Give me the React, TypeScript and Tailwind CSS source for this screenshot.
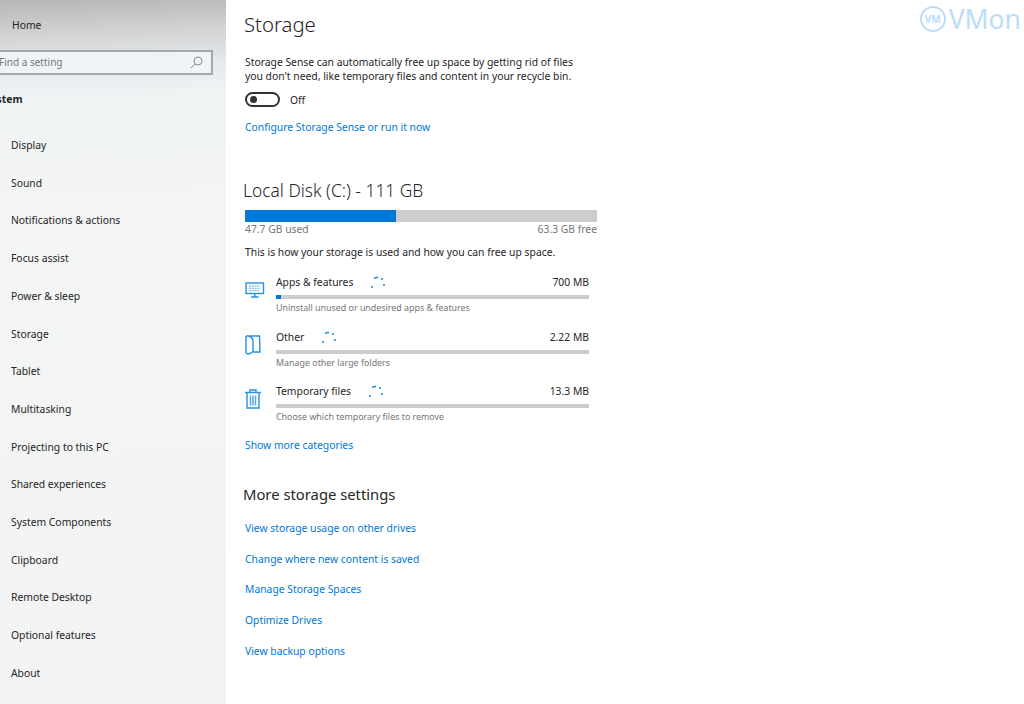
const sideItems = [
  'Display',
  'Sound',
  'Notifications & actions',
  'Focus assist',
  'Power & sleep',
  'Storage',
  'Tablet',
  'Multitasking',
  'Projecting to this PC',
  'Shared experiences',
  'System Components',
  'Clipboard',
  'Remote Desktop',
  'Optional features',
  'About',
]

const moreLinks = [
  'View storage usage on other drives',
  'Change where new content is saved',
  'Manage Storage Spaces',
  'Optimize Drives',
  'View backup options',
]

function Spinner() {
  return (
    <svg width="16" height="14" viewBox="0 0 16 14" className="shrink-0" fill="#0078d7">
      <circle cx="4" cy="2" r="0.9" />
      <circle cx="6" cy="1.5" r="0.9" />
      <circle cx="11" cy="3" r="0.9" />
      <circle cx="13" cy="9" r="0.9" />
      <circle cx="1" cy="11" r="0.9" />
    </svg>
  )
}

function AppsIcon() {
  return (
    <svg width="20" height="16" viewBox="0 0 20 16" fill="none" stroke="#2b8fe0" strokeWidth="1.4">
      <rect x="1" y="1" width="17.500" height="10.500" />
      <path d="M9.750 11.500v3M6 15h7.500" />
      <path d="M4 4h11.500M4 6.300h11.500M4 8.600h11.500" stroke="#8cc2ee" strokeWidth="1.300" strokeDasharray="2 0.800" />
    </svg>
  )
}

function OtherIcon() {
  return (
    <svg width="16" height="20" viewBox="0 0 16 20" fill="none" stroke="#2b8fe0" strokeWidth="1.4">
      <path d="M1 1h13.500l.5 16H8" />
      <path d="M3.500 1c3 1 4.500 3 4.500 5v10c0 1-2 2-4.500 3C2 19 1 18 1 17V1" />
    </svg>
  )
}

function TrashIcon() {
  return (
    <svg width="16" height="20" viewBox="0 0 16 20" fill="none" stroke="#2b8fe0" strokeWidth="1.4">
      <path d="M0 3.500h16M5 3.500V1h6v2.500" />
      <path d="M2 3.500v15.500h12V3.500" />
      <path d="M5.500 6.500v10M8 6.500v10M10.500 6.500v10" stroke="#5aa8e8" strokeWidth="1.500" />
    </svg>
  )
}

function StorageRow({
  icon,
  title,
  size,
  desc,
  used,
}: {
  icon: React.ReactNode
  title: string
  size: string
  desc: string
  used?: boolean
}) {
  return (
    <div className="flex h-[54.5px] items-start">
      <div className="flex h-[32px] w-[31px] shrink-0 items-center">{icon}</div>
      <div className="w-[313px]">
        <div className="flex h-[18px] items-center text-[#262626]">
          <span>{title}</span>
          <span className="ml-[18px]">
            <Spinner />
          </span>
          <span className="ml-auto">{size}</span>
        </div>
        <div className="mt-[3px] h-[4px] bg-[#cccccc]">
          {used && <div className="h-full w-[5px] bg-[#0078d7]" />}
        </div>
        <div className="mt-[2px] text-[8.900px] leading-[14px] text-[#767676]">{desc}</div>
      </div>
    </div>
  )
}

export default function App() {
  return (
    <div className="relative flex h-[704px] w-[1024px] overflow-hidden bg-white font-['Noto_Sans',sans-serif] text-[10.350px] text-[#262626]">
      <aside className="w-[226px] shrink-0 bg-[linear-gradient(178deg,#b6b6b6_0%,#d2d3d4_5%,#e6eaed_10%,#f0f3f4_14%,#f4f5f5_35%,#f1f3f4_100%)]">
        <div className="flex h-[50px] items-center pl-3 pt-px">Home</div>
        <div className="-ml-2 flex h-[25px] w-[221px] items-center justify-between border-2 border-[#a5a7a9] bg-[#f1f4f6] pl-[5px] pr-2 text-[10px] text-[#767676]">
          <span>Find a setting</span>
          <svg width="13" height="13" viewBox="0 0 13 13" fill="none" stroke="#8a8a8a" strokeWidth="1">
            <circle cx="8" cy="5" r="4" />
            <path d="M5 8l-4 4" />
          </svg>
        </div>
        <div className="-ml-[15px] mt-[17px] h-[27px] font-bold">System</div>
        <nav className="mt-[8px]">
          {sideItems.map((item) => (
            <div key={item} className="flex h-[37.700px] items-center pl-[11px]">
              {item}
            </div>
          ))}
        </nav>
      </aside>

      <main className="pl-[19px]">
        <h1 className="-ml-px mt-[9px] h-[30px] text-[20.300px] font-light leading-[30px] text-[#1f1f1f]">Storage</h1>
        <p className="mt-[16px] w-[340px] leading-[14px]">
          Storage Sense can automatically free up space by getting rid of files you don't need, like
          temporary files and content in your recycle bin.
        </p>
        <div className="mt-[8px] flex items-center gap-[10px]">
          <div className="flex h-[15px] w-[35px] items-center rounded-full border-2 border-[#333333] pl-[3px]">
            <div className="h-[7px] w-[7px] rounded-full bg-[#333333]" />
          </div>
          <span className="pt-[2px]">Off</span>
        </div>
        <a className="mt-[11px] block text-[#0078d7]">Configure Storage Sense or run it now</a>

        <h2 className="-ml-[2px] mt-[42px] h-[26px] text-[17.400px] font-light leading-[26px]">Local Disk (C:) - 111 GB</h2>
        <div className="mt-[7px] h-[12px] w-[352px] bg-[#cccccc]">
          <div className="h-full w-[151px] bg-[#0078d7]" />
        </div>
        <div className="flex w-[352px] justify-between text-[#767676]">
          <span>47.7 GB used</span>
          <span>63.3 GB free</span>
        </div>
        <p className="mt-[7px]">This is how your storage is used and how you can free up space.</p>

        <div className="mt-[14px]">
          <StorageRow
            icon={<AppsIcon />}
            title="Apps & features"
            size="700 MB"
            desc="Uninstall unused or undesired apps & features"
            used
          />
          <StorageRow
            icon={<OtherIcon />}
            title="Other"
            size="2.22 MB"
            desc="Manage other large folders"
          />
          <StorageRow
            icon={<TrashIcon />}
            title="Temporary files"
            size="13.3 MB"
            desc="Choose which temporary files to remove"
          />
        </div>
        <a className="block text-[#0078d7]">Show more categories</a>

        <h3 className="-ml-[2px] mt-[29px] text-[14.800px] leading-[24px]">More storage settings</h3>
        <div className="mt-[7px] flex flex-col">
          {moreLinks.map((link) => (
            <a key={link} className="flex h-[30.800px] items-center text-[#0078d7]">
              {link}
            </a>
          ))}
        </div>
      </main>

      <div className="absolute right-[3px] top-[5px] flex items-center gap-[3px] text-[#bcdcfb]">
        <div className="flex h-[26px] w-[26px] items-center justify-center rounded-full border-2 border-[#bcdcfb] text-[10px] font-bold">
          VM
        </div>
        <span className="text-[26.500px] leading-[28px]">VMon</span>
      </div>
    </div>
  )
}
